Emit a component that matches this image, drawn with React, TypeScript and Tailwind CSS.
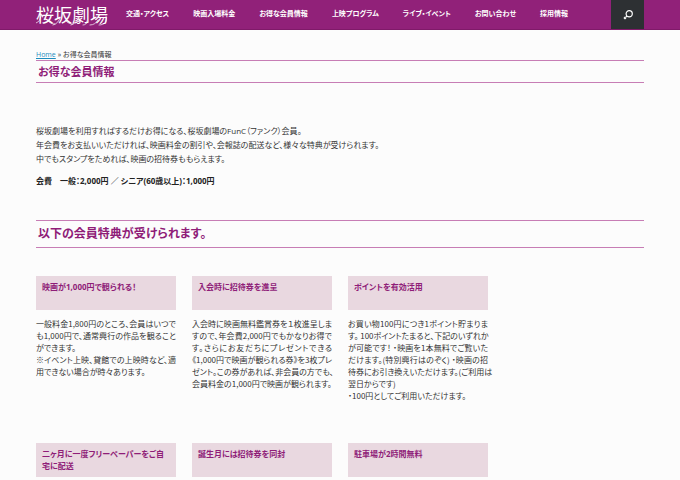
const navItems = [
  '交通・アクセス',
  '映画入場料金',
  'お得な会員情報',
  '上映プログラム',
  'ライブ・イベント',
  'お問い合わせ',
  '採用情報',
]

type Benefit = {
  title: string
  /** Paragraphs, each one a list of its set lines. */
  body?: string[][]
}

const benefits: Benefit[] = [
  {
    title: '映画が1,000円で観られる！',
    body: [
      ['一般料金1,800円のところ、会員はいつで', 'も1,000円で、通常興行の作品を観ること', 'ができます。'],
      ['※イベント上映、貸館での上映時など、適', '用できない場合が時々あります。'],
    ],
  },
  {
    title: '入会時に招待券を進呈',
    body: [
      [
        '入会時に映画無料鑑賞券を１枚進呈しま',
        'すので、年会費2,000円でもかなりお得で',
        'す。さらにお友だちにプレゼントできる',
        '《1,000円で映画が観られる券》を3枚プレ',
        'ゼント。この券があれば、非会員の方でも、',
        '会員料金の1,000円で映画が観られます。',
      ],
    ],
  },
  {
    title: 'ポイントを有効活用',
    body: [
      [
        'お買い物100円につき1ポイント貯まりま',
        'す。 100ポイントたまると、下記のいずれか',
        'が可能です！ ・映画を1本無料でご覧いた',
        'だけます。(特別興行はのぞく) ・映画の招',
        '待券にお引き換えいただけます。(ご利用は',
        '翌日からです)',
      ],
      ['・100円としてご利用いただけます。'],
    ],
  },
]

const moreBenefits: Benefit[] = [
  { title: '二ヶ月に一度フリーペーパーをご自宅に配送' },
  { title: '誕生月には招待券を同封' },
  { title: '駐車場が2時間無料' },
]

function Logo() {
  return (
    <a href="#" className="relative block w-[90px] shrink-0 text-[18px] leading-[28px] text-white">
      桜坂劇場
      {/* brush tails that sweep under the lettering */}
      <svg
        className="absolute left-0 top-0 h-[28px] w-[74px]"
        viewBox="0 0 74 28"
        fill="none"
        stroke="currentColor"
        strokeWidth="0.7"
        strokeLinecap="round"
        aria-hidden="true"
      >
        <path d="M5 15C4 19 3 21 0 22" />
        <path d="M12 20C14 22 16 23 19 23" />
        <path d="M24 17C23 20 21 23 17 24M30 20C32 22 34 23 37 23" />
        <path d="M42 18C40 21 38 23 35 24M51 20C51 23 49 24 47 24" />
        <path d="M70 15C72 20 69 24 63 24M62 19C60 22 58 24 54 24" />
      </svg>
    </a>
  )
}

function BenefitCard({ title, body }: Benefit) {
  return (
    <article className="min-w-0">
      <h3 className="h-[34px] bg-[#e9d8e0] px-[6px] pt-[5px] text-[8px] font-bold leading-[12px] text-[#8f1d78]">
        {title}
      </h3>
      {body && (
        <div className="mt-2 whitespace-nowrap font-['Noto_Sans_CJK_JP',sans-serif] text-[8px] leading-[12px]">
          {body.map((lines) => (
            <p key={lines[0]}>
              {lines.map((line) => (
                <span key={line} className="block text-justify [text-align-last:justify] last:[text-align-last:left]">
                  {line}
                </span>
              ))}
            </p>
          ))}
        </div>
      )}
    </article>
  )
}

export default function App() {
  return (
    <div className="min-h-screen bg-[#fcfcfc] font-['Open_Sans','Noto_Sans_CJK_JP',sans-serif] text-[#333] [font-feature-settings:'palt']" lang="ja">
      <header className="border-b border-[#7f1a69] bg-[#912179] px-9">
        <div className="flex h-[29px] items-center">
          <Logo />
          <nav className="flex flex-1 gap-6 whitespace-nowrap text-[7px] font-bold text-white">
            {navItems.map((item) => (
              <a key={item} href="#">
                {item}
              </a>
            ))}
          </nav>
          <button type="button" aria-label="検索" className="flex h-full w-[33px] items-center justify-center bg-[#2d3033] text-white">
            <svg className="size-[10px]" viewBox="0 0 10 10" fill="none" stroke="currentColor" aria-hidden="true">
              <circle cx="6.2" cy="3.8" r="3.1" strokeWidth="1.2" />
              <path d="M4 6L2.6 7.4" strokeWidth="1.2" />
              <path d="M2.6 7.4L1.2 8.8" strokeWidth="2.2" />
            </svg>
          </button>
        </div>
      </header>

      <main className="px-9 pt-5">
        <div className="text-[7px] leading-[10px]">
          <a href="#" className="text-[#1e8cbe] underline">
            Home
          </a>{' '}
          » お得な会員情報
        </div>
        <h1 className="border-y border-[#c77db5] px-[2px] text-[11px] font-bold leading-[21px] text-[#8f1d78]">
          お得な会員情報
        </h1>

        <div className="mt-[41px] text-[8px] leading-[14px]">
          <p>
            桜坂劇場を利用すればするだけお得になる、桜坂劇場のFunC（ファンク）会員。
            <br />
            年会費をお支払いいただければ、映画料金の割引や、会報誌の配送など、様々な特典が受けられます。
            <br />
            中でもスタンプをためれば、映画の招待券ももらえます。
          </p>
          <p className="mt-2 font-bold text-[#222]">会費　一般：2,000円 ／ シニア(60歳以上)：1,000円</p>
        </div>

        <h2 className="mt-8 border-y border-[#c77db5] px-[2px] text-[12px] font-bold leading-[26px] text-[#8f1d78]">
          以下の会員特典が受けられます。
        </h2>

        <section className="mt-7 grid grid-cols-4 gap-4">
          {benefits.map((b) => (
            <BenefitCard key={b.title} {...b} />
          ))}
        </section>
        <section className="mt-[41px] grid grid-cols-4 gap-4">
          {moreBenefits.map((b) => (
            <BenefitCard key={b.title} {...b} />
          ))}
        </section>
      </main>
    </div>
  )
}
